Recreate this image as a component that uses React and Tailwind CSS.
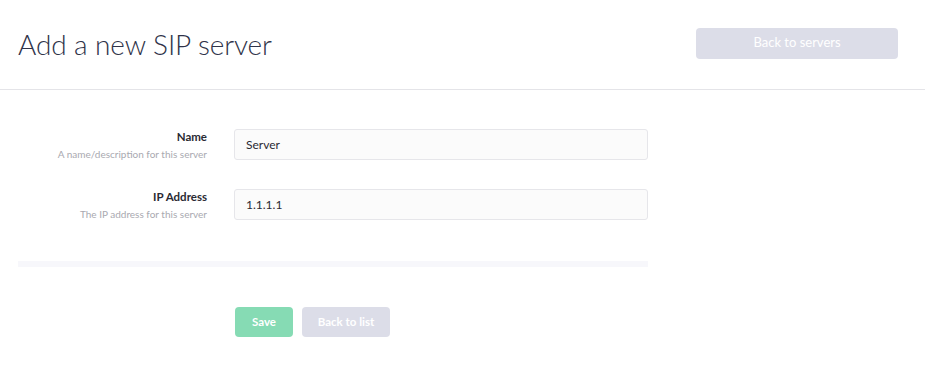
import React from "react";

const fields = [
  { label: "Name", hint: "A name/description for this server", value: "Server" },
  { label: "IP Address", hint: "The IP address for this server", value: "1.1.1.1" },
];

export default function App() {
  return (
    <div className="min-h-[369px] w-full bg-white font-['Lato','Open_Sans',sans-serif] text-[#2d3146]">
      {/* Header */}
      <div className="flex h-[90px] items-center justify-between border-b border-[#e4e4e8] pl-[18px] pr-[27px]">
        <h1 className="-mt-[2px] text-[28px] font-light tracking-[-0.1px] text-[#2f3349]">Add a new SIP server</h1>
        <button className="-mt-[3px] h-[31px] w-[202px] rounded-[4px] bg-[#dcdde8] text-[13px] text-white">
          Back to servers
        </button>
      </div>

      {/* Form */}
      <div className="pl-[18px] pt-[39px]">
        <div className="flex flex-col gap-[29px]">
          {fields.map((f) => (
            <div key={f.label} className="flex items-start">
              <div className="w-[189px] pt-[1px] text-right">
                <div className="text-[11.5px] font-bold leading-[14px] text-[#2a2a33]">{f.label}</div>
                <div className="mt-[4px] text-[10px] leading-[12px] text-[#a9a9b0]">{f.hint}</div>
              </div>
              <input
                readOnly
                value={f.value}
                className="ml-[27px] h-[31px] w-[414px] rounded-[3px] border border-[#e6e6ea] bg-[#fbfbfb] px-[11px] text-[12px] text-[#2a2a33] outline-none"
              />
            </div>
          ))}
        </div>

        <div className="mt-[41px] h-[6px] w-[630px] bg-[#f7f7fb]" />

        <div className="mt-[40px] flex gap-[9px] pl-[217px]">
          <button className="h-[30px] w-[58px] rounded-[4px] bg-[#86dbb4] text-[11.5px] font-bold text-white">Save</button>
          <button className="h-[30px] w-[88px] rounded-[4px] bg-[#dcdde8] text-[11.5px] font-bold text-white">Back to list</button>
        </div>
      </div>
    </div>
  );
}
